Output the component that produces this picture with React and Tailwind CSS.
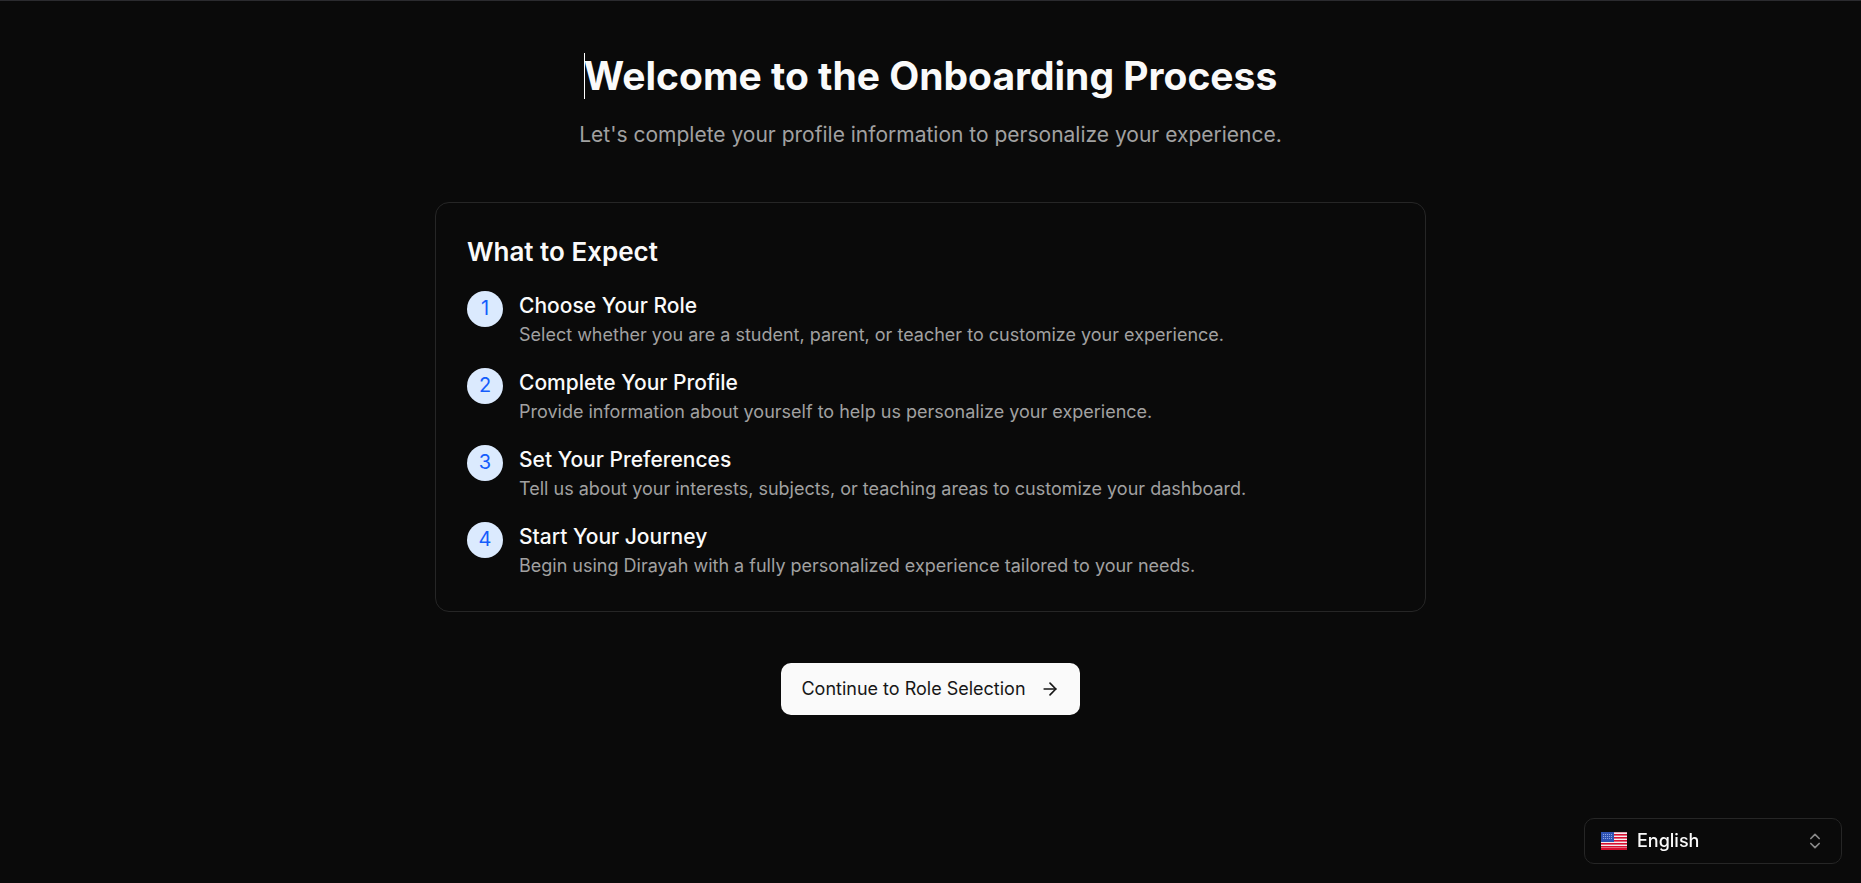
import { ArrowRight, ChevronsUpDown } from "lucide-react";

const steps = [
  {
    title: "Choose Your Role",
    text: "Select whether you are a student, parent, or teacher to customize your experience.",
  },
  {
    title: "Complete Your Profile",
    text: "Provide information about yourself to help us personalize your experience.",
  },
  {
    title: "Set Your Preferences",
    text: "Tell us about your interests, subjects, or teaching areas to customize your dashboard.",
  },
  {
    title: "Start Your Journey",
    text: "Begin using Dirayah with a fully personalized experience tailored to your needs.",
  },
];

const stripes = [2, 5, 8, 11, 14, 16];
const starRows = [2, 4, 6];
const starCols = [3, 5, 7, 9, 11];

function UsFlag() {
  return (
    <svg viewBox="0 0 26 18" className="h-[18px] w-[26px] shrink-0" aria-hidden="true">
      <rect width="26" height="18" fill="#f5eef1" />
      <rect width="26" height="1" fill="#d9a3ae" />
      {stripes.map((y) => (
        <rect key={y} y={y} width="26" height={y === 16 ? 2 : 1.6} fill="#d80f30" />
      ))}
      <rect width="13" height="10" fill="#2e52b2" />
      {starRows.map((y) =>
        starCols.map((x) => (
          <circle key={`${x}-${y}`} cx={x - 0.5} cy={y + 0.5} r="0.6" fill="#9db4ea" />
        ))
      )}
    </svg>
  );
}

function Step({ number, title, text }) {
  return (
    <li className="flex items-start gap-4">
      <span className="flex size-9 shrink-0 items-center justify-center rounded-full bg-blue-100 pb-0.5 text-xl text-blue-600">
        {number}
      </span>
      <div>
        <h3 className="text-[21px] leading-[30px] font-medium">{title}</h3>
        <p className="text-lg leading-7 text-[#a1a1a1]">{text}</p>
      </div>
    </li>
  );
}

function LanguagePicker() {
  return (
    <div className="fixed right-[19px] bottom-[19px] flex h-[46px] w-[258px] items-center gap-2.5 rounded-[10px] border border-[#262626] px-4">
      <UsFlag />
      <select
        aria-label="Language"
        className="min-w-0 flex-1 appearance-none bg-transparent text-lg leading-7 font-medium text-neutral-50 outline-none"
      >
        <option>English</option>
      </select>
      <ChevronsUpDown className="pointer-events-none size-5 text-[#8a8a8a]" aria-hidden="true" />
    </div>
  );
}

export default function App() {
  return (
    <div className="min-h-screen border-t border-[#2b2b2f] bg-neutral-950 font-['Inter',sans-serif] text-neutral-50">
      <main className="mx-auto flex w-full max-w-[991px] flex-col items-center pt-[52px]">
        <h1 className="relative text-center text-[39px] leading-[46px] font-bold">
          <span className="absolute inset-y-0 left-0 w-px bg-white" />
          Welcome to the Onboarding Process
        </h1>
        <p className="mt-[22px] text-center text-[21px] leading-7 text-[#a1a1a1]">
          Let's complete your profile information to personalize your experience.
        </p>

        <section className="mt-[53px] w-full rounded-[14px] border border-[#262626] px-[31px] pt-[31px] pb-[31px]">
          <h2 className="text-[26px] leading-9 font-semibold">What to Expect</h2>
          <ol className="mt-[21px] flex flex-col gap-[19px]">
            {steps.map((step, i) => (
              <Step key={step.title} number={i + 1} title={step.title} text={step.text} />
            ))}
          </ol>
        </section>

        <button
          type="button"
          className="mt-[51px] flex h-[52px] items-center gap-3.5 rounded-[10px] bg-neutral-50 px-5 text-lg text-neutral-900"
        >
          Continue to Role Selection
          <ArrowRight className="size-5" aria-hidden="true" />
        </button>
      </main>
      <LanguagePicker />
    </div>
  );
}
